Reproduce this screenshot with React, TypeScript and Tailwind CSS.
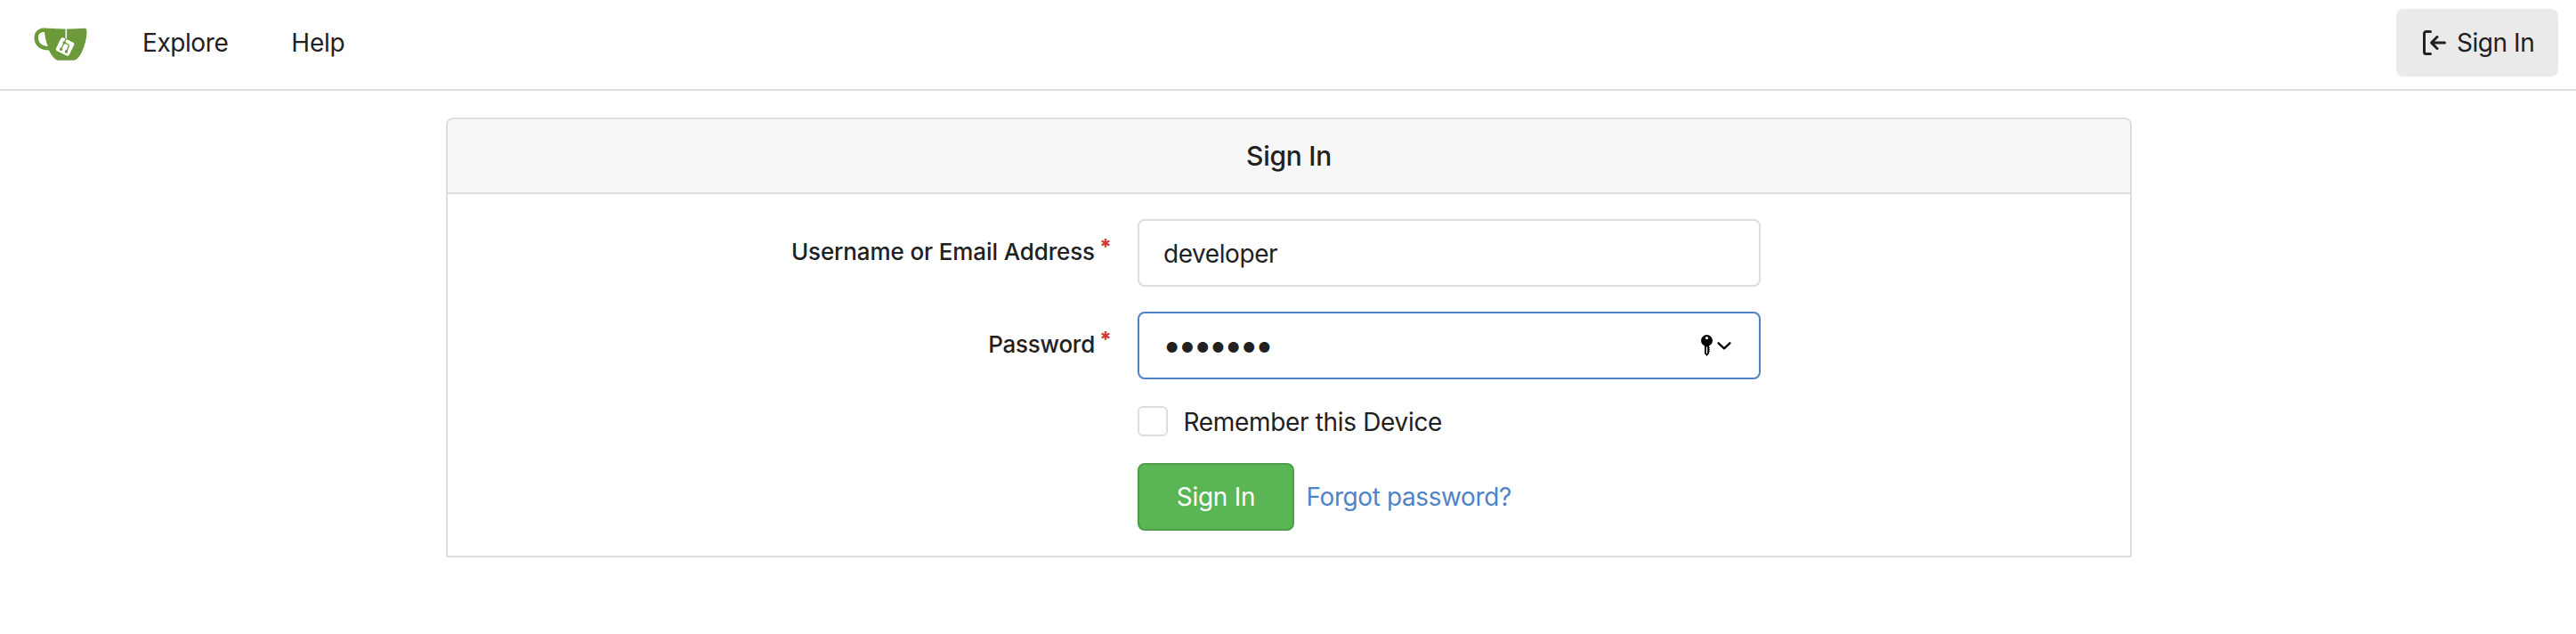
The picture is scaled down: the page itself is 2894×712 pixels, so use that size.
import type { ReactNode } from "react";

function GiteaLogo() {
  return (
    <svg viewBox="0 0 640 640" className="size-[60px]" aria-hidden="true">
      <path
        fill="#fff"
        d="m395.9 484.2-126.9-61c-12.5-6-17.9-21.2-11.8-33.8l61-126.9c6-12.5 21.2-17.9 33.8-11.8 17.2 8.3 27.1 13 27.1 13l-.1-109.2 16.7-.1.1 117.1s57.4 24.2 83.1 40.1c3.7 2.3 10.2 6.8 12.9 14.4 2.1 6.1 2 13.1-1 19.3l-61 126.9c-6.2 12.7-21.4 18.1-33.9 12"
      />
      <path
        fill="#6c993a"
        d="M622.7 149.8c-4.1-4.1-9.6-4-9.6-4s-117.2 6.6-177.9 8c-13.3.3-26.5.6-39.6.7v117.2c-5.5-2.6-11.1-5.3-16.6-7.9 0-36.4-.1-109.2-.1-109.2-29 .4-89.2-2.2-89.2-2.2s-141.4-7.1-156.8-8.5c-9.8-.6-22.5-2.1-39 1.5-8.7 1.8-33.5 7.4-53.8 26.9C-4.9 212.4 6.6 276.2 8 285.8c1.7 11.7 6.9 44.2 31.7 72.5 45.8 56.1 144.4 54.8 144.4 54.8s12.1 28.9 30.6 55.5c25 33.1 50.7 58.9 75.7 62 63 0 188.9-.1 188.9-.1s12 .1 28.3-10.3c14-8.5 26.5-23.4 26.5-23.4S547 483 565 451.5c5.5-9.7 10.1-19.1 14.1-28 0 0 55.2-117.1 55.2-231.1-1.1-34.5-9.6-40.6-11.6-42.6M125.6 353.9c-25.9-8.5-36.9-18.7-36.9-18.7S69.6 321.8 60 295.4c-16.5-44.2-1.4-71.2-1.4-71.2s8.4-22.5 38.5-30c13.8-3.7 31-3.1 31-3.1s7.1 59.4 15.7 94.2c7.2 29.2 24.8 77.7 24.8 77.7s-26.1-3.1-43-9.1m300.3 107.6s-6.1 14.5-19.6 15.4c-5.8.4-10.3-1.2-10.3-1.2s-.3-.1-5.3-2.1l-112.9-55s-10.9-5.7-12.8-15.6c-2.2-8.1 2.7-18.1 2.7-18.1L322 273s4.8-9.7 12.2-13c.6-.3 2.3-1 4.5-1.5 8.1-2.1 18 2.8 18 2.8L467.4 315s12.6 5.7 15.3 16.2c1.9 7.4-.5 14-1.8 17.2-6.3 15.4-55 113.1-55 113.1"
      />
      <path
        fill="#6c993a"
        d="M326.8 380.1c-8.2.1-15.4 5.8-17.3 13.8s2 16.3 9.1 20c7.7 4 17.5 1.8 22.7-5.4 5.1-7.1 4.3-16.9-1.8-23.1l24-49.1c1.5.1 3.7.2 6.2-.5 4.1-.9 7.1-3.6 7.1-3.6 4.2 1.8 8.6 3.8 13.2 6.1 4.8 2.4 9.3 4.9 13.4 7.3.9.5 1.8 1.1 2.8 1.9 1.6 1.3 3.4 3.1 4.7 5.5 1.9 5.5-1.9 14.9-1.9 14.9-2.3 7.6-18.4 40.6-18.4 40.6-8.1-.2-15.3 5-17.7 12.5-2.6 8.1 1.1 17.3 8.9 21.3s17.4 1.7 22.5-5.3c5-6.8 4.6-16.3-1.1-22.6 1.9-3.7 3.7-7.4 5.6-11.3 5-10.4 13.5-30.4 13.5-30.4.9-1.7 5.7-10.3 2.7-21.3-2.5-11.4-12.6-16.7-12.6-16.7-12.2-7.9-29.2-15.2-29.2-15.2s0-4.1-1.1-7.1c-1.1-3.1-2.8-5.1-3.9-6.3 4.7-9.7 9.4-19.3 14.1-29-4.1-2-8.1-4-12.2-6.1-4.8 9.8-9.7 19.7-14.5 29.5-6.7-.1-12.9 3.5-16.1 9.4-3.4 6.3-2.7 14.1 1.9 19.8z"
      />
    </svg>
  );
}

function SignInIcon() {
  return (
    <svg viewBox="0 0 16 16" className="size-8" fill="currentColor" aria-hidden="true">
      <path d="M2 2.75C2 1.784 2.784 1 3.75 1h2.5a.75.75 0 0 1 0 1.5h-2.5a.25.25 0 0 0-.25.25v10.5c0 .138.112.25.25.25h2.5a.75.75 0 0 1 0 1.5h-2.5A1.75 1.75 0 0 1 2 13.25Zm6.56 4.5h5.69a.75.75 0 0 1 0 1.5H8.56l1.97 1.97a.749.749 0 0 1-.326 1.275.749.749 0 0 1-.734-.215L6.22 8.53a.75.75 0 0 1 0-1.06l3.25-3.25a.749.749 0 0 1 1.275.326.749.749 0 0 1-.215.734Z" />
    </svg>
  );
}

function KeyMenuIcon() {
  return (
    <svg viewBox="0 0 34 24" className="h-6 w-[34px]" aria-hidden="true">
      <circle cx="6.5" cy="6.5" r="6.5" fill="#000" />
      <circle cx="6.5" cy="3.6" r="1.6" fill="#fff" />
      <path d="M4 12h5v1.5l1 1-1 1 1 1-1 1 1 1-1 1V21l-2.500 3L4 21Z" fill="#000" />
      <path d="M6.5 13.500v7.500" stroke="#fff" strokeWidth="1.300" fill="none" />
      <path
        d="M19.600 9.300l6.400 6 6.400-6"
        fill="none"
        stroke="#000"
        strokeWidth="2.300"
        strokeLinecap="round"
        strokeLinejoin="round"
      />
    </svg>
  );
}

function Label({ className, children }: { className: string; children: ReactNode }) {
  return (
    <label className="flex h-[76px] w-[746px] items-center justify-end pb-0.5 text-[26px] leading-9 font-medium">
      <span className={className}>{children}</span>
      <span className="ml-[5px] -translate-y-[5px] text-[24px] font-extrabold text-[#cf3f36]">*</span>
    </label>
  );
}

export default function App() {
  return (
    <div className="min-h-[712px] bg-white font-[Inter,sans-serif] text-[28px] leading-9 text-[#212121]">
      <nav className="flex h-[102px] items-center border-b-2 border-[#dedede] pr-5 pb-1 pl-[38px]">
        <GiteaLogo />
        <a className="ml-[62px] tracking-[-0.42px]">Explore</a>
        <a className="ml-[71px] tracking-[-0.2px]">Help</a>
        <a className="ml-auto flex h-[76px] w-[182px] items-center rounded-lg bg-[#eaeaea] pl-[26px]">
          <SignInIcon />
          <span className="ml-[10px] tracking-[-0.45px] whitespace-nowrap">Sign In</span>
        </a>
      </nav>

      <main className="mt-[30px] ml-[501px] w-[1894px]">
        <h4 className="flex h-[86px] items-center justify-center rounded-t-lg border-2 border-[#dedede] bg-[#f7f7f7] text-[30px] font-medium tracking-[-0.28px]">
          Sign In
        </h4>
        <form className="flex h-[408px] flex-col border-2 border-t-0 border-[#dedede] pt-7">
          <div className="flex">
            <Label className="tracking-[-0.12px]">Username or Email Address</Label>
            <div className="ml-[29px] flex h-[76px] w-[700px] items-center rounded-lg border-2 border-[#dedede] px-[27px] pt-[2px]">
              <span className="tracking-[-0.42px]">developer</span>
            </div>
          </div>
          <div className="mt-7 flex">
            <Label className="tracking-[-0.25px]">Password</Label>
            <div className="ml-[29px] flex h-[76px] w-[700px] items-center justify-between rounded-lg border-2 border-[#4f84c4] pr-[31px] pl-[26px]">
              <span className="pb-[3px] text-[38px] tracking-[-4.1px]">•••••••</span>
              <KeyMenuIcon />
            </div>
          </div>
          <div className="mt-[30px] ml-[775px] flex h-[34px] items-center">
            <span className="size-[34px] rounded-md border-2 border-[#dedede]" />
            <span className="ml-[17.5px] pt-0.5 tracking-[-0.33px]">Remember this Device</span>
          </div>
          <div className="mt-[30px] ml-[775px] flex items-center">
            <button
              type="button"
              className="h-[76px] w-44 rounded-lg border-2 border-[#4f9f4a] bg-[#5ab555] tracking-[-0.28px] text-white"
            >
              Sign In
            </button>
            <a className="ml-[13.5px] tracking-[-0.4px] text-[#4f84c4]">Forgot password?</a>
          </div>
        </form>
      </main>
    </div>
  );
}
